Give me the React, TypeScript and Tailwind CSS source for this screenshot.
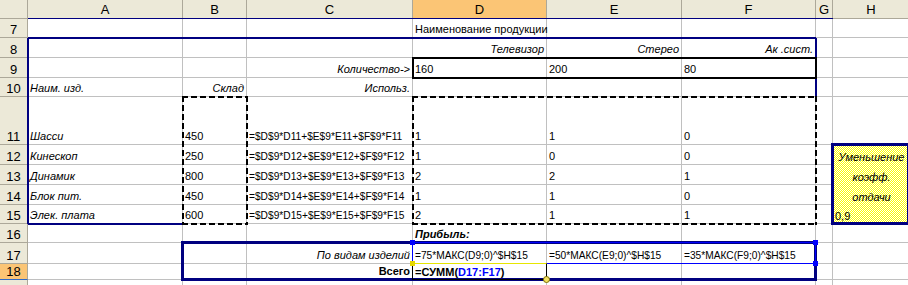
import React from 'react'

type Cell = { v?: React.ReactNode; s?: string; bare?: boolean }

const cols = 'grid-cols-[28px_155px_64px_166px_134px_135px_134px_17px_77px]'
const rowsTpl =
  'grid-rows-[19px_19px_20px_20px_19px_48px_20px_20px_20px_19px_19px_21px_16px_20px]'

const it = 'italic'
const r = 'justify-end'
const fx = 'text-[10.2px]'
const dots =
  'bg-[image:repeating-conic-gradient(#ffff00_0_25%,#ffffff_0_50%)] bg-size-[2px_2px]'
// excel "medium dashed" outline: 6px dash, 3px gap
const dashed =
  'bg-[image:repeating-linear-gradient(90deg,#000_0_6px,transparent_6px_9px),repeating-linear-gradient(90deg,#000_0_6px,transparent_6px_9px),repeating-linear-gradient(180deg,#000_0_6px,transparent_6px_9px),repeating-linear-gradient(180deg,#000_0_6px,transparent_6px_9px)] bg-size-[100%_2px,100%_2px,2px_100%,2px_100%] bg-position-[0_0,0_100%,0_0,100%_0] bg-no-repeat'

const f = (n: number) => `=$D$9*D${n}+$E$9*E${n}+$F$9*F${n}`

const sheet: { n: number; cells: Cell[] }[] = [
  { n: 7, cells: [{}, {}, {}, { v: 'Наименование продукции' }, {}, {}, {}, {}] },
  {
    n: 8,
    cells: [
      {},
      {},
      {},
      { v: 'Телевизор', s: `${it} ${r}` },
      { v: 'Стерео', s: `${it} ${r}` },
      { v: 'Ак .сист.', s: `${it} ${r}` },
      {},
      {},
    ],
  },
  {
    n: 9,
    cells: [{}, {}, { v: 'Количество->', s: `${it} ${r}` }, { v: '160' }, { v: '200' }, { v: '80' }, {}, {}],
  },
  {
    n: 10,
    cells: [
      { v: 'Наим. изд.', s: it },
      { v: 'Склад', s: `${it} ${r}` },
      { v: 'Использ.', s: `${it} ${r}` },
      {},
      {},
      {},
      {},
      {},
    ],
  },
  {
    n: 11,
    cells: [{ v: 'Шасси', s: it }, { v: '450' }, { v: f(11), s: fx }, { v: '1' }, { v: '1' }, { v: '0' }, {}, {}],
  },
  {
    n: 12,
    cells: [
      { v: 'Кинескоп', s: it },
      { v: '250' },
      { v: f(12), s: fx },
      { v: '1' },
      { v: '0' },
      { v: '0' },
      {},
      { v: 'Уменьшение', s: `${it} justify-center ${dots}`, bare: true },
    ],
  },
  {
    n: 13,
    cells: [
      { v: 'Динамик', s: it },
      { v: '800' },
      { v: f(13), s: fx },
      { v: '2' },
      { v: '2' },
      { v: '1' },
      {},
      { v: 'коэфф.', s: `${it} justify-center ${dots}`, bare: true },
    ],
  },
  {
    n: 14,
    cells: [
      { v: 'Блок пит.', s: it },
      { v: '450' },
      { v: f(14), s: fx },
      { v: '1' },
      { v: '1' },
      { v: '0' },
      {},
      { v: 'отдачи', s: `${it} justify-center ${dots}`, bare: true },
    ],
  },
  {
    n: 15,
    cells: [
      { v: 'Элек. плата', s: it },
      { v: '600' },
      { v: f(15), s: fx },
      { v: '2' },
      { v: '1' },
      { v: '1' },
      {},
      { v: '0,9', s: dots, bare: true },
    ],
  },
  { n: 16, cells: [{}, {}, {}, { v: 'Прибыль:', s: 'italic font-bold' }, {}, {}, {}, {}] },
  {
    n: 17,
    cells: [
      {},
      {},
      { v: 'По видам изделий', s: `${it} ${r}` },
      { v: '=75*МАКС(D9;0)^$H$15', s: fx },
      { v: '=50*МАКС(E9;0)^$H$15', s: fx },
      { v: '=35*МАКС(F9;0)^$H$15', s: fx },
      {},
      {},
    ],
  },
  {
    n: 18,
    cells: [
      {},
      {},
      { v: 'Всего', s: `font-bold ${r}` },
      {
        v: (
          <>
            =СУММ(<span className="text-[#0000ff]">D17:F17</span>)
          </>
        ),
        s: 'font-bold items-start pt-[2px]',
      },
      {},
      {},
      {},
      {},
    ],
  },
  { n: 19, cells: [{}, {}, {}, {}, {}, {}, {}, {}] },
]

function SheetCell({ v, s = '', bare }: Cell) {
  return (
    <div
      className={`flex min-w-0 items-end whitespace-nowrap px-[2px] pb-px leading-[13px] ${
        bare ? '' : 'border-r border-b border-[#c0c0c0]'
      } ${s}`}
    >
      {v}
    </div>
  )
}

function ColHead({ l, on }: { l: string; on?: boolean }) {
  return (
    <div
      className={`flex items-center justify-center border-r border-b border-[#aca899] text-[13px] leading-[15px] ${
        on ? 'bg-[#fbc575]' : 'bg-[#ece9d8]'
      }`}
    >
      {l}
    </div>
  )
}

function RowHead({ n }: { n: number }) {
  const on = n === 18
  return (
    <div
      className={`flex items-end justify-center border-r border-b text-[13px] leading-[15px] ${
        on ? 'border-r-[#aca899] border-b-[#316ac5] bg-[#fbc575]' : 'border-[#aca899] bg-[#ece9d8]'
      }`}
    >
      {n}
    </div>
  )
}

export default function App() {
  return (
    <div className="h-[285px] w-[908px] overflow-hidden bg-white font-['Liberation_Sans',Arial,sans-serif] text-[11px] text-black">
      <div className="grid">
        {/* cells */}
        <div className={`col-start-1 row-start-1 grid ${cols} ${rowsTpl}`}>
          <div className="border-r border-b border-[#aca899] bg-[#ece9d8]" />
          {['A', 'B', 'C', 'D', 'E', 'F', 'G', 'H'].map((l) => (
            <ColHead key={l} l={l} on={l === 'D'} />
          ))}
          {sheet.map((row) => (
            <React.Fragment key={row.n}>
              <RowHead n={row.n} />
              {row.cells.map((c, i) => (
                <SheetCell key={i} {...c} />
              ))}
            </React.Fragment>
          ))}
        </div>

        {/* borders drawn over the cells */}
        <div className={`pointer-events-none col-start-1 row-start-1 grid ${cols} ${rowsTpl}`}>
          <div className="col-start-2 col-end-9 row-start-2 -mt-px border-t border-[#000080]" />

          <div className="col-start-2 col-end-8 row-start-3 -mt-px border-t-2 border-[#000080]" />
          <div className="col-start-2 row-start-3 row-end-11 -ml-px border-l-2 border-[#000080]" />
          <div className="col-start-7 row-start-3 row-end-6 -mr-px border-r-2 border-[#000080]" />
          <div className="col-start-2 row-start-10 -mb-px border-b-2 border-[#000080]" />

          <div className="col-start-5 col-end-8 row-start-4 -m-px border-2 border-black" />

          <div className={`col-start-3 row-start-6 row-end-11 -m-px ${dashed}`} />
          <div className={`col-start-5 col-end-8 row-start-6 row-end-11 -m-px ${dashed}`} />

          <div className="col-start-9 row-start-7 row-end-11 -mt-[2px] -mb-px -ml-[2px] border-[3px] border-[#000080]" />

          <div className="col-start-3 col-end-8 row-start-12 row-end-14 -mt-[2px] -mr-px -mb-px -ml-[2px] border-[3px] border-[#000080]" />

          <div className="relative col-start-5 col-end-8 row-start-12 -mt-px -ml-px border border-[#0000ff]">
            <span className="absolute -top-[3px] -left-[3px] h-[5px] w-[5px] bg-[#0000ff]" />
            <span className="absolute -top-[3px] -right-[3px] h-[5px] w-[5px] bg-[#0000ff]" />
            <span className="absolute -right-[3px] -bottom-[3px] h-[5px] w-[5px] bg-[#0000ff]" />
          </div>

          <div className="relative col-start-5 row-start-13 -mt-px -ml-px border border-black border-t-[#e6e600]">
            <span className="absolute -top-[3px] -left-[3px] h-[5px] w-[5px] bg-[#e6d800]" />
            <span className="absolute -right-[4px] -bottom-[4px] h-[7px] w-[7px] rounded-full border border-[#807000] bg-[#f2e060]" />
          </div>
        </div>
      </div>
    </div>
  )
}
